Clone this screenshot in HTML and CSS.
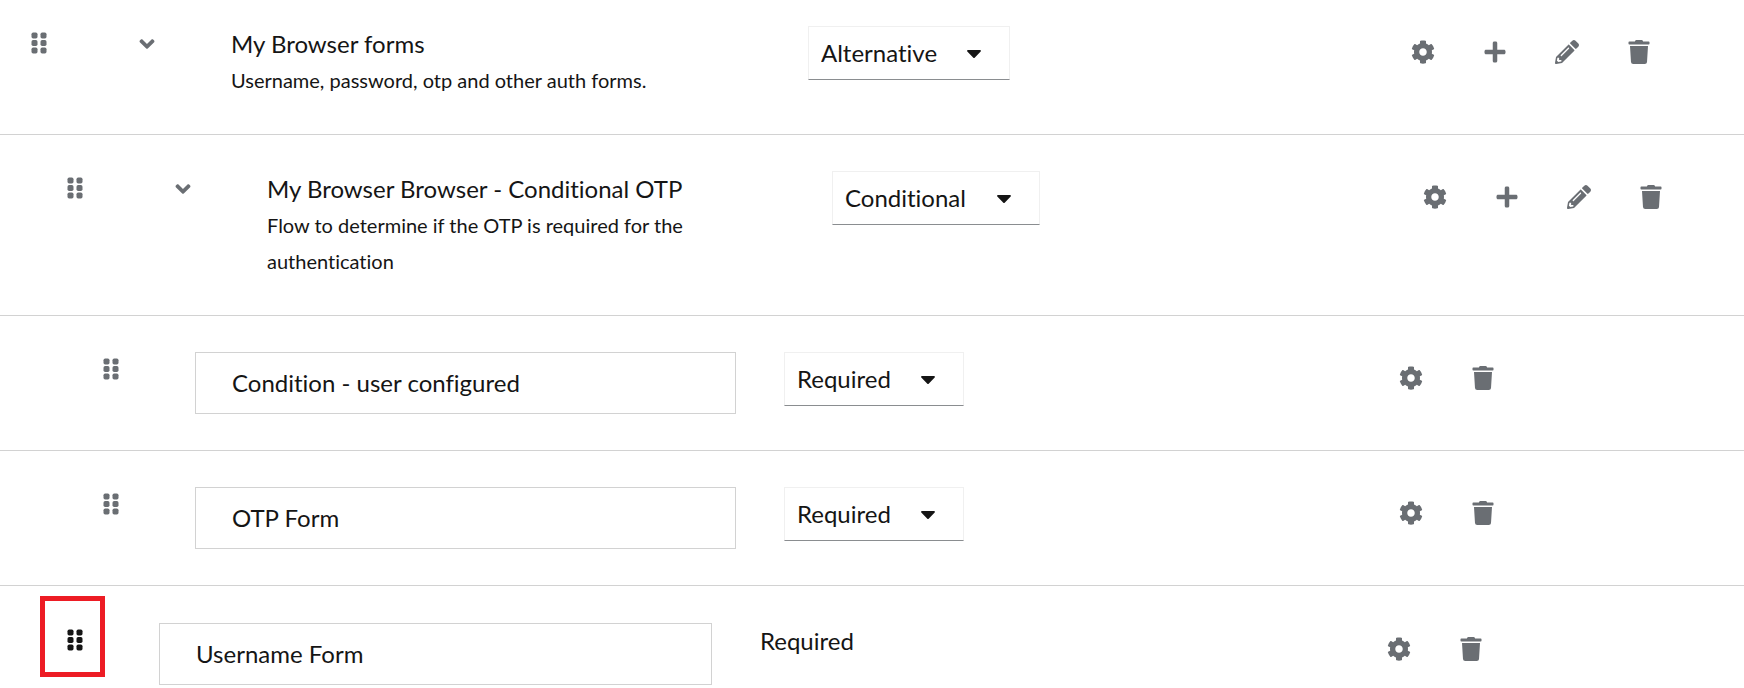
FILE: index.html
```html
<!DOCTYPE html>
<html lang="en">
<head>
  <meta charset="UTF-8" />
  <meta name="viewport" content="width=device-width, initial-scale=1.0" />
  <title>Authentication flow</title>
  <link rel="stylesheet" href="styles.css">
</head>
<body>

  <!-- Icon sprite -->
  <svg class="sprite" aria-hidden="true">
    <symbol id="grip" viewBox="0 0 320 512">
      <rect x="0" y="32" width="128" height="128" rx="36" />
      <rect x="192" y="32" width="128" height="128" rx="36" />
      <rect x="0" y="192" width="128" height="128" rx="36" />
      <rect x="192" y="192" width="128" height="128" rx="36" />
      <rect x="0" y="352" width="128" height="128" rx="36" />
      <rect x="192" y="352" width="128" height="128" rx="36" />
    </symbol>
    <symbol id="angle" viewBox="0 0 320 512">
      <path d="M143 352.3L7 216.3c-9.4-9.4-9.4-24.6 0-33.9l22.6-22.6c9.4-9.4 24.6-9.4 33.9 0l96.4 96.4 96.4-96.4c9.4-9.4 24.6-9.4 33.9 0l22.6 22.6c9.4 9.4 9.4 24.6 0 33.9l-136 136c-9.2 9.4-24.4 9.4-33.8 0z" />
    </symbol>
    <symbol id="caret" viewBox="0 0 320 512">
      <path d="M31.3 192h257.3c17.8 0 26.7 21.5 14.1 34.1L174.1 354.8c-7.8 7.8-20.5 7.8-28.3 0L17.2 226.1C4.6 213.5 13.5 192 31.3 192z" />
    </symbol>
    <symbol id="cog" viewBox="0 0 512 512">
      <path d="M487.4 315.7l-42.6-24.6c4.3-23.2 4.3-47 0-70.2l42.6-24.6c4.9-2.8 7.1-8.6 5.5-14-11.1-35.6-30-67.8-54.7-94.6-3.8-4.1-10-5.1-14.8-2.3L380.8 110c-17.9-15.4-38.5-27.3-60.8-35.1V25.8c0-5.6-3.9-10.5-9.4-11.7-36.7-8.2-74.3-7.8-109.2 0-5.5 1.2-9.4 6.1-9.4 11.7V75c-22.2 7.9-42.8 19.8-60.8 35.1L88.7 85.5c-4.9-2.8-11-1.9-14.8 2.3-24.7 26.7-43.6 58.9-54.7 94.6-1.7 5.4.6 11.2 5.5 14L67.3 221c-4.3 23.2-4.3 47 0 70.2l-42.6 24.6c-4.9 2.8-7.1 8.6-5.5 14 11.1 35.6 30 67.8 54.7 94.6 3.8 4.1 10 5.1 14.8 2.3l42.6-24.6c17.9 15.4 38.5 27.3 60.8 35.1v49.2c0 5.6 3.9 10.5 9.4 11.7 36.7 8.2 74.3 7.8 109.2 0 5.5-1.2 9.4-6.1 9.4-11.7v-49.2c22.2-7.9 42.8-19.8 60.8-35.1l42.6 24.6c4.9 2.8 11 1.9 14.8-2.3 24.7-26.7 43.6-58.9 54.7-94.6 1.5-5.5-.7-11.3-5.6-14.1zM256 336c-44.1 0-80-35.9-80-80s35.9-80 80-80 80 35.9 80 80-35.9 80-80 80z" />
    </symbol>
    <symbol id="plus" viewBox="0 0 448 512">
      <path d="M416 208H272V64c0-17.67-14.33-32-32-32h-32c-17.67 0-32 14.33-32 32v144H32c-17.67 0-32 14.33-32 32v32c0 17.67 14.33 32 32 32h144v144c0 17.67 14.33 32 32 32h32c17.67 0 32-14.33 32-32V304h144c17.67 0 32-14.33 32-32v-32c0-17.67-14.33-32-32-32z" />
    </symbol>
    <symbol id="pencil" viewBox="0 0 512 512">
      <path d="M497.9 142.1l-46.1 46.1c-4.7 4.7-12.3 4.7-17 0l-111-111c-4.7-4.7-4.7-12.3 0-17l46.1-46.1c18.7-18.7 49.1-18.7 67.9 0l60.1 60.1c18.8 18.7 18.8 49.1 0 67.9zM284.2 99.8L21.6 362.4.4 483.9c-2.9 16.4 11.4 30.6 27.8 27.8l121.5-21.3 262.6-262.6c4.7-4.7 4.7-12.3 0-17l-111-111c-4.8-4.7-12.4-4.7-17.1 0zM124.1 339.9c-5.5-5.5-5.5-14.3 0-19.8l154-154c5.5-5.5 14.3-5.5 19.8 0s5.5 14.3 0 19.8l-154 154c-5.5 5.5-14.3 5.5-19.8 0zM88 424h48v36.3l-64.5 11.3-31.1-31.1L51.7 376H88v48z" />
    </symbol>
    <symbol id="trash" viewBox="0 0 448 512">
      <path d="M432 32H312l-9.4-18.7A24 24 0 0 0 281.1 0H166.8a23.72 23.72 0 0 0-21.4 13.3L136 32H16A16 16 0 0 0 0 48v32a16 16 0 0 0 16 16h416a16 16 0 0 0 16-16V48a16 16 0 0 0-16-16zM53.2 467a48 48 0 0 0 47.9 45h245.8a48 48 0 0 0 47.9-45L416 128H32z" />
    </symbol>
  </svg>

  <ul class="flow-list">

    <li class="row level-1">
      <button class="grip" type="button" aria-label="Drag My Browser forms"><svg class="icon"><use href="#grip" /></svg></button>
      <button class="toggle" type="button" aria-label="Collapse My Browser forms" aria-expanded="true"><svg class="icon"><use href="#angle" /></svg></button>
      <div class="cells">
        <div class="name">
          <div class="title">My Browser forms</div>
          <div class="description">Username, password, otp and other auth forms.</div>
        </div>
        <div class="requirement">
          <div class="select-box">
            <select class="select select-alternative" aria-label="Requirement for My Browser forms">
              <option>Required</option>
              <option selected>Alternative</option>
              <option>Disabled</option>
              <option>Conditional</option>
            </select>
            <svg class="caret"><use href="#caret" /></svg>
          </div>
        </div>
        <div class="actions">
          <button class="action" type="button" aria-label="Settings"><svg class="icon"><use href="#cog" /></svg></button>
          <button class="action" type="button" aria-label="Add"><svg class="icon"><use href="#plus" /></svg></button>
          <button class="action" type="button" aria-label="Edit"><svg class="icon"><use href="#pencil" /></svg></button>
          <button class="action" type="button" aria-label="Delete"><svg class="icon"><use href="#trash" /></svg></button>
        </div>
      </div>
    </li>

    <li class="row level-2">
      <button class="grip" type="button" aria-label="Drag Conditional OTP"><svg class="icon"><use href="#grip" /></svg></button>
      <button class="toggle" type="button" aria-label="Collapse Conditional OTP" aria-expanded="true"><svg class="icon"><use href="#angle" /></svg></button>
      <div class="cells">
        <div class="name">
          <div class="title">My Browser Browser - Conditional OTP</div>
          <div class="description">Flow to determine if the OTP is required for the authentication</div>
        </div>
        <div class="requirement">
          <div class="select-box">
            <select class="select select-conditional" aria-label="Requirement for Conditional OTP">
              <option>Required</option>
              <option>Alternative</option>
              <option>Disabled</option>
              <option selected>Conditional</option>
            </select>
            <svg class="caret"><use href="#caret" /></svg>
          </div>
        </div>
        <div class="actions">
          <button class="action" type="button" aria-label="Settings"><svg class="icon"><use href="#cog" /></svg></button>
          <button class="action" type="button" aria-label="Add"><svg class="icon"><use href="#plus" /></svg></button>
          <button class="action" type="button" aria-label="Edit"><svg class="icon"><use href="#pencil" /></svg></button>
          <button class="action" type="button" aria-label="Delete"><svg class="icon"><use href="#trash" /></svg></button>
        </div>
      </div>
    </li>

    <li class="row level-3">
      <button class="grip" type="button" aria-label="Drag Condition - user configured"><svg class="icon"><use href="#grip" /></svg></button>
      <div class="cells">
        <div class="step">Condition - user configured</div>
        <div class="requirement">
          <div class="select-box">
            <select class="select select-required" aria-label="Requirement for Condition - user configured">
              <option selected>Required</option>
              <option>Disabled</option>
            </select>
            <svg class="caret"><use href="#caret" /></svg>
          </div>
        </div>
        <div class="actions">
          <button class="action" type="button" aria-label="Settings"><svg class="icon"><use href="#cog" /></svg></button>
          <button class="action" type="button" aria-label="Delete"><svg class="icon"><use href="#trash" /></svg></button>
        </div>
      </div>
    </li>

    <li class="row level-3">
      <button class="grip" type="button" aria-label="Drag OTP Form"><svg class="icon"><use href="#grip" /></svg></button>
      <div class="cells">
        <div class="step">OTP Form</div>
        <div class="requirement">
          <div class="select-box">
            <select class="select select-required" aria-label="Requirement for OTP Form">
              <option selected>Required</option>
              <option>Alternative</option>
              <option>Disabled</option>
            </select>
            <svg class="caret"><use href="#caret" /></svg>
          </div>
        </div>
        <div class="actions">
          <button class="action" type="button" aria-label="Settings"><svg class="icon"><use href="#cog" /></svg></button>
          <button class="action" type="button" aria-label="Delete"><svg class="icon"><use href="#trash" /></svg></button>
        </div>
      </div>
    </li>

    <li class="row level-2">
      <button class="grip grip-active" type="button" aria-label="Drag Username Form"><svg class="icon"><use href="#grip" /></svg><span class="marker"></span></button>
      <div class="cells">
        <div class="step">Username Form</div>
        <div class="requirement">Required</div>
        <div class="actions">
          <button class="action" type="button" aria-label="Settings"><svg class="icon"><use href="#cog" /></svg></button>
          <button class="action" type="button" aria-label="Delete"><svg class="icon"><use href="#trash" /></svg></button>
        </div>
      </div>
    </li>

  </ul>

</body>
</html>
```
FILE: styles.css
```css
* {
  box-sizing: border-box;
}

body {
  margin: 0;
  background-color: #ffffff;
  color: #151515;
  font-family: Lato, "Open Sans", sans-serif;
  font-size: 24px;
  line-height: 36px;
  font-variant-ligatures: none;
}

button {
  padding: 0;
  border: 0;
  background: none;
  color: #6a6e73;
  cursor: pointer;
}

.sprite {
  display: none;
}

.flow-list {
  margin: 0;
  padding: 0;
  list-style: none;
}

.row {
  display: flex;
  align-items: flex-start;
  gap: 60px;
  padding-top: 36px;
  padding-bottom: 36px;
  border-bottom: 1px solid #d2d2d2;
}

.row:first-child {
  padding-top: 26px;
}

.row:last-child {
  padding-top: 37px;
  padding-bottom: 0;
  border-bottom: 0;
}

.level-1 {
  padding-left: 15px;
}

.level-2 {
  padding-left: 51px;
}

.level-3 {
  padding-left: 87px;
}

.grip,
.toggle {
  position: relative;
  display: flex;
  flex: none;
  align-items: center;
  justify-content: center;
  width: 48px;
  height: 34px;
}

.toggle {
  height: 36px;
}

.grip-active {
  color: #151515;
}

.marker {
  position: absolute;
  top: -27px;
  left: -11px;
  width: 65px;
  height: 81px;
  border: 5px solid #ed1c24;
}

.icon {
  width: 24px;
  height: 24px;
  fill: currentColor;
}

/* name and requirement get equal columns, the actions take what is left */
.cells {
  display: grid;
  flex: 1;
  grid-template-columns: repeat(2, calc((100% + 74px) / 3)) 1fr;
  column-gap: 48px;
  align-items: start;
}

.description {
  font-size: 20px;
}

.step {
  padding: 12px 36px;
  border: 1px solid #d2d2d2;
}

.select-box {
  display: inline-grid;
  align-items: center;
  vertical-align: top;
}

.select {
  grid-area: 1 / 1;
  height: 54px;
  padding: 0 12px;
  border: 1px solid #f0f0f0;
  border-bottom-color: #8a8d90;
  border-radius: 0;
  background-color: #ffffff;
  color: #151515;
  font: inherit;
  font-variant-ligatures: none;
  appearance: none;
}

.select-alternative {
  width: 202px;
}

.select-conditional {
  width: 208px;
}

.select-required {
  width: 180px;
}

.caret {
  grid-area: 1 / 1;
  justify-self: end;
  width: 16px;
  height: 24px;
  margin-right: 28px;
  fill: #151515;
  pointer-events: none;
}

.actions {
  display: flex;
  padding-left: 2px;
}

.action {
  display: flex;
  align-items: center;
  justify-content: center;
  width: 72px;
  height: 52px;
}
```
